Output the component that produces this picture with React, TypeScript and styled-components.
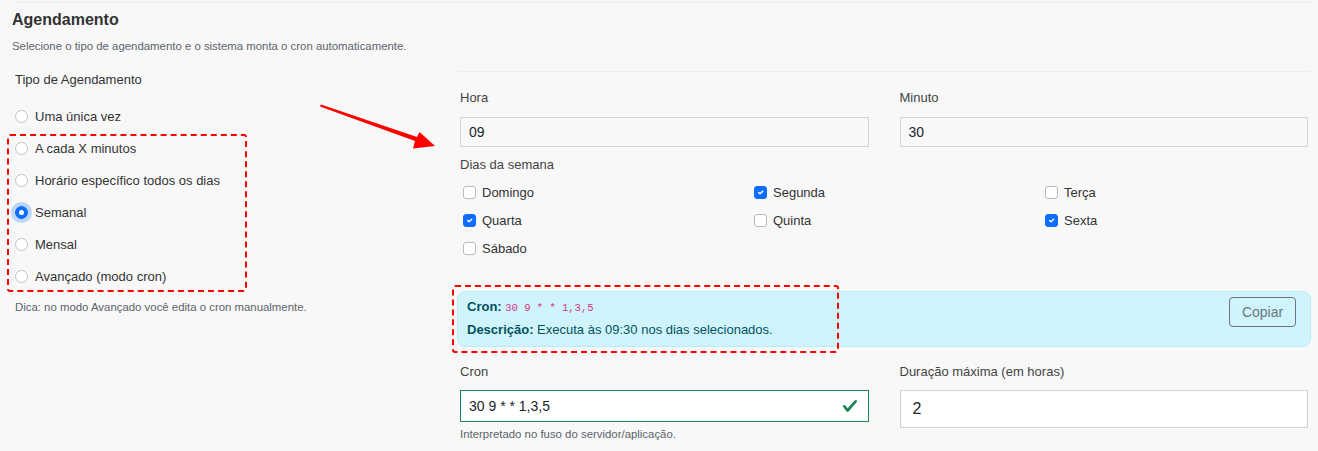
import React from "react";
import styled, { createGlobalStyle } from "styled-components";

const Global = createGlobalStyle`
  html, body { margin: 0; padding: 0; background: #f8f8f8; }
  body { font-family: "Liberation Sans", Arial, sans-serif; color: #212529; }
  * { box-sizing: border-box; }
`;

const Page = styled.div`
  position: relative;
  width: 1318px;
  height: 451px;
  overflow: hidden;
  padding-top: 2px;
`;

const Header = styled.header`
  margin: 0 5px 0 12px;
  border-top: 1px solid #eceeef;
  padding-top: 7px;
`;

const Title = styled.h1`
  margin: 0;
  font-size: 16px;
  line-height: 20px;
  font-weight: 700;
  color: #333;
`;

const Subtitle = styled.p`
  margin: 8px 0 0;
  font-size: 11.4px;
  line-height: 16px;
  color: #5c636a;
`;

const Main = styled.div`
  display: grid;
  grid-template-columns: 457px 854px;
  margin-top: 17px;
`;

const LeftCol = styled.div`
  padding-left: 15px;
`;

const SectionLabel = styled.div`
  font-size: 13px;
  line-height: 18px;
  color: #333;
`;

const RadioList = styled.div`
  margin-top: 11px;
  display: flex;
  flex-direction: column;
`;

const RadioRow = styled.label`
  display: flex;
  align-items: center;
  height: 32px;
  gap: 7px;
  font-size: 13px;
  color: #333;
`;

const RadioDot = styled.span<{ $on?: boolean }>`
  width: 13px;
  height: 13px;
  border-radius: 50%;
  flex: none;
  border: 1px solid ${(p) => (p.$on ? "#0d6efd" : "#bfc4c9")};
  background: ${(p) => (p.$on ? "#0d6efd" : "#fff")};
  box-shadow: ${(p) => (p.$on ? "0 0 0 4px rgba(13,110,253,0.25)" : "none")};
  display: flex;
  align-items: center;
  justify-content: center;
  &::after {
    content: "";
    width: 5px;
    height: 5px;
    border-radius: 50%;
    background: #fff;
    display: ${(p) => (p.$on ? "block" : "none")};
  }
`;

const Hint = styled.div`
  margin-top: 8px;
  font-size: 11.4px;
  line-height: 14px;
  color: #5c636a;
`;

const RightCol = styled.div`
  border-top: 1px solid #eceeef;
  padding-top: 17px;
`;

const FieldGrid = styled.div`
  display: grid;
  grid-template-columns: 1fr 1fr;
  column-gap: 31px;
  padding: 0 3px;
`;

const Field = styled.div`
  display: flex;
  flex-direction: column;
`;

const FieldLabel = styled.div`
  font-size: 13px;
  line-height: 18px;
  color: #444;
  margin-bottom: 10px;
`;

const DaysLabel = styled.div`
  font-size: 13px;
  line-height: 18px;
  color: #444;
`;

const TextBox = styled.div<{ $white?: boolean; $valid?: boolean; $h: number; $size: number; $pl?: number }>`
  height: ${(p) => p.$h}px;
  border: 1px solid ${(p) => (p.$valid ? "#198754" : "#ced4da")};
  background: ${(p) => (p.$white ? "#fff" : "#f8f8f8")};
  display: flex;
  align-items: center;
  justify-content: space-between;
  padding: 0 10px 0 ${(p) => p.$pl ?? 8}px;
  font-size: ${(p) => p.$size}px;
  color: #212529;
`;

const DaysBlock = styled.div`
  margin-top: 9px;
  padding: 0 3px;
`;

const DaysGrid = styled.div`
  margin-top: 4px;
  display: grid;
  grid-template-columns: 291px 291px 291px;
  padding-left: 3px;
`;

const CheckRow = styled.label`
  display: flex;
  align-items: center;
  gap: 6px;
  height: 28px;
  font-size: 13px;
  color: #333;
`;

const CheckBox = styled.span<{ $on?: boolean }>`
  width: 13px;
  height: 13px;
  border-radius: 3px;
  flex: none;
  border: 1px solid ${(p) => (p.$on ? "#0d6efd" : "#b5bbc1")};
  background: ${(p) => (p.$on ? "#0d6efd" : "#fff")};
  display: flex;
  align-items: center;
  justify-content: center;
`;

const Alert = styled.div`
  margin-top: 29px;
  background: #cff4fc;
  border: 1px solid #b6effb;
  border-radius: 8px;
  padding: 4px 14px 5px 9px;
  display: flex;
  justify-content: space-between;
  align-items: flex-start;
  color: #055160;
`;

const AlertText = styled.div`
  font-size: 13px;
  line-height: 22px;
`;

const Code = styled.code`
  font-family: "Liberation Mono", "Courier New", monospace;
  font-size: 10.5px;
  color: #d63384;
`;

const CopyButton = styled.button`
  margin-top: 1px;
  width: 67px;
  height: 30px;
  border: 1px solid #6c757d;
  border-radius: 4px;
  background: transparent;
  color: #6c757d;
  font-family: "Liberation Sans", Arial, sans-serif;
  font-size: 14px;
  padding: 0;
`;

const BottomGrid = styled(FieldGrid)`
  margin-top: 16px;
`;

const BottomLabel = styled(FieldLabel)`
  margin-bottom: 9px;
`;

const Help = styled.div`
  margin-top: 5px;
  font-size: 11.4px;
  line-height: 14px;
  color: #5c636a;
`;

const DashBox = styled.div<{ $x: number; $y: number; $w: number; $h: number }>`
  position: absolute;
  left: ${(p) => p.$x}px;
  top: ${(p) => p.$y}px;
  width: ${(p) => p.$w}px;
  height: ${(p) => p.$h}px;
  border: 2px dashed #ff0000;
  border-radius: 3px;
  pointer-events: none;
`;

const ArrowSvg = styled.svg`
  position: absolute;
  left: 0;
  top: 0;
  pointer-events: none;
`;

const Check = () => (
  <svg width="9" height="9" viewBox="0 0 20 20">
    <path d="M6 10l3 3 6-6" fill="none" stroke="#fff" strokeWidth="3" strokeLinecap="round" strokeLinejoin="round" />
  </svg>
);

const ValidIcon = () => (
  <svg width="16" height="16" viewBox="0 0 8 8">
    <path
      fill="#198754"
      d="M2.3 6.73.6 4.53c-.4-1.04.46-1.4 1.1-.8l1.1 1.4 3.4-3.8c.6-.63 1.6-.27 1.2.7l-4 4.6c-.43.5-.8.4-1.1.1z"
    />
  </svg>
);

const options = [
  "Uma única vez",
  "A cada X minutos",
  "Horário específico todos os dias",
  "Semanal",
  "Mensal",
  "Avançado (modo cron)",
];

const days: [string, boolean][] = [
  ["Domingo", false],
  ["Segunda", true],
  ["Terça", false],
  ["Quarta", true],
  ["Quinta", false],
  ["Sexta", true],
  ["Sábado", false],
];

export default function App() {
  return (
    <>
      <Global />
      <Page>
        <Header>
          <Title>Agendamento</Title>
          <Subtitle>Selecione o tipo de agendamento e o sistema monta o cron automaticamente.</Subtitle>
        </Header>
        <Main>
          <LeftCol>
            <SectionLabel>Tipo de Agendamento</SectionLabel>
            <RadioList>
              {options.map((o) => (
                <RadioRow key={o}>
                  <RadioDot $on={o === "Semanal"} />
                  {o}
                </RadioRow>
              ))}
            </RadioList>
            <Hint>Dica: no modo Avançado você edita o cron manualmente.</Hint>
          </LeftCol>
          <RightCol>
            <FieldGrid>
              <Field>
                <FieldLabel>Hora</FieldLabel>
                <TextBox $h={30} $size={14}>09</TextBox>
              </Field>
              <Field>
                <FieldLabel>Minuto</FieldLabel>
                <TextBox $h={30} $size={14}>30</TextBox>
              </Field>
            </FieldGrid>
            <DaysBlock>
              <DaysLabel>Dias da semana</DaysLabel>
              <DaysGrid>
                {days.map(([d, on]) => (
                  <CheckRow key={d}>
                    <CheckBox $on={on}>{on && <Check />}</CheckBox>
                    {d}
                  </CheckRow>
                ))}
              </DaysGrid>
            </DaysBlock>
            <Alert>
              <AlertText>
                <div>
                  <b>Cron:</b> <Code>30 9 * * 1,3,5</Code>
                </div>
                <div>
                  <b>Descrição:</b> Executa às 09:30 nos dias selecionados.
                </div>
              </AlertText>
              <CopyButton>Copiar</CopyButton>
            </Alert>
            <BottomGrid>
              <Field>
                <BottomLabel>Cron</BottomLabel>
                <TextBox $white $valid $h={32} $size={14}>
                  30 9 * * 1,3,5
                  <ValidIcon />
                </TextBox>
                <Help>Interpretado no fuso do servidor/aplicação.</Help>
              </Field>
              <Field>
                <BottomLabel>Duração máxima (em horas)</BottomLabel>
                <TextBox $white $h={38} $size={16} $pl={12}>2</TextBox>
              </Field>
            </BottomGrid>
          </RightCol>
        </Main>
        <DashBox $x={7} $y={134} $w={240} $h={158} />
        <DashBox $x={452} $y={285} $w={387} $h={68} />
        <ArrowSvg width="1318" height="451">
          <polygon points="320,106.5 415,141 413,148.5 435,146 419.5,132 417,137 321,104.5" fill="#ff0000" />
        </ArrowSvg>
      </Page>
    </>
  );
}
